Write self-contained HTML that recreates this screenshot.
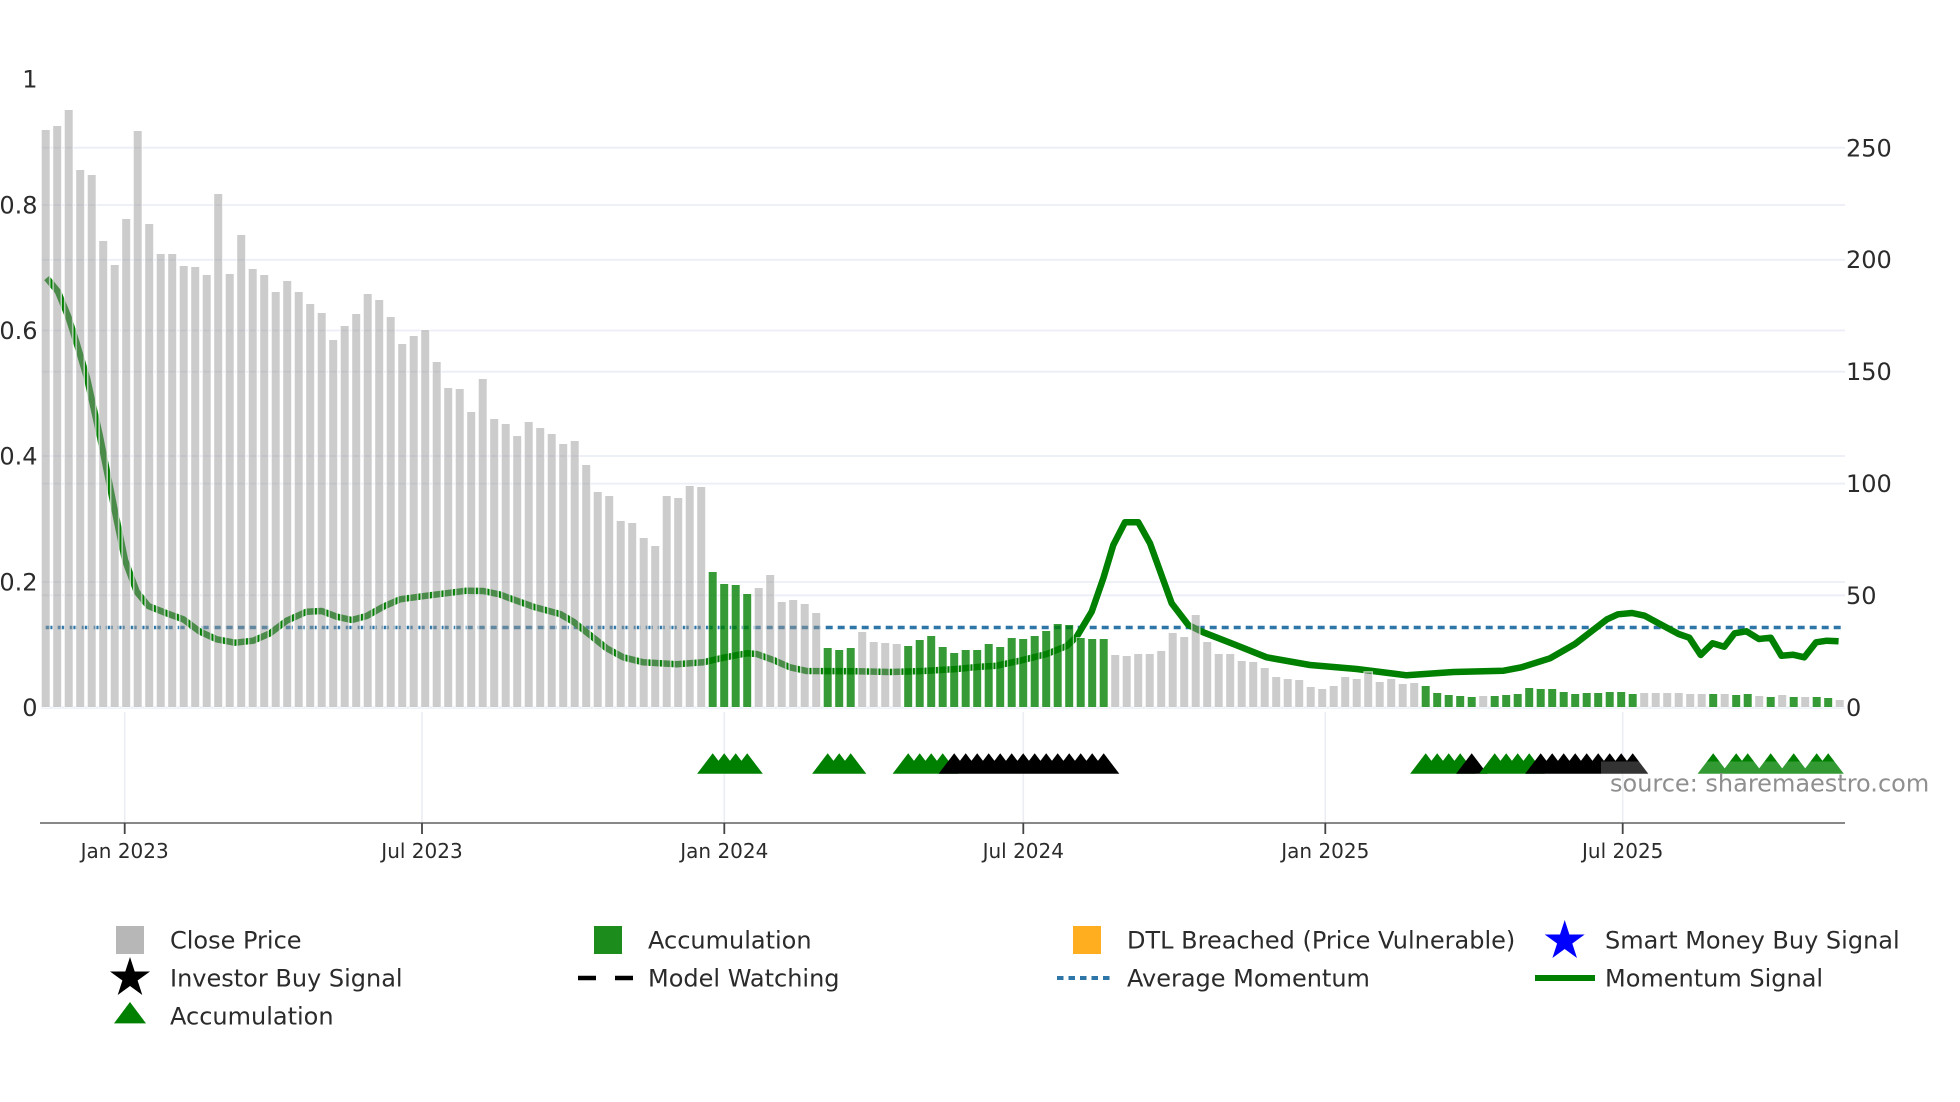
<!DOCTYPE html>
<html><head><meta charset="utf-8"><title>Chart</title>
<style>
html,body{margin:0;padding:0;background:#fff;width:1960px;height:1102px;overflow:hidden}
svg{display:block}
text{font-family:"DejaVu Sans",sans-serif;fill:#2b2b2b}
.y{font-size:24px}
.x{font-size:20px;text-anchor:middle}
.l{font-size:24px}
</style></head><body>
<svg width="1960" height="1102" viewBox="0 0 1960 1102" xmlns="http://www.w3.org/2000/svg">
<!-- horizontal grid -->
<g stroke="#ebeef6" stroke-width="1.8">
<path d="M41 147.7H1845M41 205H1845M41 259.8H1845M41 330.5H1845M41 371.7H1845M41 456H1845M41 483.6H1845M41 582H1845M41 595.3H1845"/>
</g>
<path d="M41 707.6H1845" stroke="#ebf0f8" stroke-width="2.6"/>
<!-- vertical grid -->
<path d="M124.7 712V823M422 712V823M724.3 712V823M1023.3 712V823M1325.3 712V823M1622.7 712V823" stroke="#ebedf3" stroke-width="1.6"/>
<!-- average momentum -->
<path d="M45.7 627.5H1841" stroke="#2e76a8" stroke-width="3.6" stroke-dasharray="7 5" fill="none"/>
<!-- momentum -->
<polyline fill="none" stroke="#008000" stroke-width="6.5" stroke-linejoin="round" points="46.7,278 58,291.7 68.3,316.7 76.7,343.3 87,378 100,436.7 113.3,503.3 125,560 136.7,591.7 148.3,606 166.7,613.3 183.3,619.3 200,631.7 216.7,639.3 235,642.7 253.3,640.7 270,633.3 286.7,620.7 306.7,611.7 321.7,611 336.7,616.7 351.7,620 366.7,616 383.3,606.7 400,599.3 426.7,595.7 466.7,590.7 483.3,591 500,594.5 510,598.3 533.3,606.7 560,614 573.3,621.7 590,635 606.7,648.3 623.3,657.3 643.3,662.3 676.7,664.3 703.3,662.3 723.3,657.7 746.7,653.3 756.7,654 773.3,660 790,667.3 806.7,671 856.7,671.3 890,672 923.3,671 956.7,669 980,666.7 996.7,665.7 1020,660.7 1046.7,654 1066.7,646 1076.7,636.7 1091.7,611.7 1103.3,578.3 1113.3,545 1125,522.3 1138.3,522.3 1150,543.3 1171.7,603.3 1188.3,625 1203.3,632.3 1233.3,644 1266.7,657.3 1310,665 1356.7,669 1406.7,675.3 1453.6,672 1503.6,670.7 1521.4,667.3 1550,658.3 1575,644 1607,619.3 1617.9,614.3 1632.1,613 1644.6,615.7 1678.6,634 1689.3,637.7 1700.7,655 1712.5,643.3 1724.3,646.7 1734.6,633.3 1746.4,631.3 1758.9,639 1770.7,637.7 1781.4,655.7 1792.9,654.7 1804.3,657.3 1816.1,642.3 1826.8,640.7 1838.6,641.3"/>
<!-- gray bars -->
<path fill="rgba(151,151,151,.49)" stroke="#fff" stroke-opacity=".75" stroke-width="1.6" paint-order="stroke" d="M41.7 130h8V707h-8zM53.2 126h8V707h-8zM64.7 110h8V707h-8zM76.2 170h8V707h-8zM87.7 175h8V707h-8zM99.2 241h8V707h-8zM110.7 265h8V707h-8zM122.2 219h8V707h-8zM133.7 131h8V707h-8zM145.2 224h8V707h-8zM156.7 254h8V707h-8zM168.2 254h8V707h-8zM179.7 266h8V707h-8zM191.2 267h8V707h-8zM202.7 275h8V707h-8zM214.2 194h8V707h-8zM225.7 274h8V707h-8zM237.2 235h8V707h-8zM248.7 269h8V707h-8zM260.2 275h8V707h-8zM271.7 292h8V707h-8zM283.2 281h8V707h-8zM294.7 292h8V707h-8zM306.2 304h8V707h-8zM317.7 313h8V707h-8zM329.2 340h8V707h-8zM340.7 326h8V707h-8zM352.2 314h8V707h-8zM363.7 294h8V707h-8zM375.2 300h8V707h-8zM386.7 317h8V707h-8zM398.2 344h8V707h-8zM409.7 336h8V707h-8zM421.2 330h8V707h-8zM432.7 362h8V707h-8zM444.2 388h8V707h-8zM455.7 389h8V707h-8zM467.2 412h8V707h-8zM478.7 379h8V707h-8zM490.2 419h8V707h-8zM501.7 424h8V707h-8zM513.2 436h8V707h-8zM524.7 422h8V707h-8zM536.2 428h8V707h-8zM547.7 434h8V707h-8zM559.2 444h8V707h-8zM570.7 441h8V707h-8zM582.2 465h8V707h-8zM593.7 492h8V707h-8zM605.2 496h8V707h-8zM616.7 521h8V707h-8zM628.2 523h8V707h-8zM639.7 538h8V707h-8zM651.2 546h8V707h-8zM662.7 496h8V707h-8zM674.2 498h8V707h-8zM685.7 486h8V707h-8zM697.2 487h8V707h-8zM754.7 588h8V707h-8zM766.2 575h8V707h-8zM777.7 602h8V707h-8zM789.2 600h8V707h-8zM800.7 604h8V707h-8zM812.2 613h8V707h-8zM858.2 632h8V707h-8zM869.7 642h8V707h-8zM881.2 643h8V707h-8zM892.7 644h8V707h-8zM1111.2 655h8V707h-8zM1122.7 656h8V707h-8zM1134.2 654h8V707h-8zM1145.7 654h8V707h-8zM1157.2 651h8V707h-8zM1168.7 633h8V707h-8zM1180.2 637h8V707h-8zM1191.7 615h8V707h-8zM1203.2 642h8V707h-8zM1214.7 654h8V707h-8zM1226.2 654h8V707h-8zM1237.7 661h8V707h-8zM1249.2 662h8V707h-8zM1260.7 668h8V707h-8zM1272.2 677h8V707h-8zM1283.7 679h8V707h-8zM1295.2 680h8V707h-8zM1306.7 687h8V707h-8zM1318.2 689h8V707h-8zM1329.7 686h8V707h-8zM1341.2 677h8V707h-8zM1352.7 679h8V707h-8zM1364.2 672h8V707h-8zM1375.7 682h8V707h-8zM1387.2 679h8V707h-8zM1398.7 684h8V707h-8zM1410.2 683h8V707h-8zM1479.2 696h8V707h-8zM1640.2 693h8V707h-8zM1651.7 693h8V707h-8zM1663.2 693h8V707h-8zM1674.7 693h8V707h-8zM1686.2 694h8V707h-8zM1697.7 694h8V707h-8zM1720.7 694h8V707h-8zM1755.2 696h8V707h-8zM1778.2 695h8V707h-8zM1801.2 697h8V707h-8zM1835.7 700h8V707h-8z"/>
<!-- green bars -->
<path fill="rgba(0,127,0,.79)" stroke="#fff" stroke-opacity=".75" stroke-width="1.6" paint-order="stroke" d="M708.7 572h8V707h-8zM720.2 584h8V707h-8zM731.7 585h8V707h-8zM743.2 594h8V707h-8zM823.7 648h8V707h-8zM835.2 650h8V707h-8zM846.7 648h8V707h-8zM904.2 646h8V707h-8zM915.7 640h8V707h-8zM927.2 636h8V707h-8zM938.7 647h8V707h-8zM950.2 653h8V707h-8zM961.7 650h8V707h-8zM973.2 650h8V707h-8zM984.7 644h8V707h-8zM996.2 647h8V707h-8zM1007.7 638h8V707h-8zM1019.2 639h8V707h-8zM1030.7 636h8V707h-8zM1042.2 631h8V707h-8zM1053.7 624h8V707h-8zM1065.2 625h8V707h-8zM1076.7 638h8V707h-8zM1088.2 639h8V707h-8zM1099.7 639h8V707h-8zM1421.7 686h8V707h-8zM1433.2 693h8V707h-8zM1444.7 695h8V707h-8zM1456.2 696h8V707h-8zM1467.7 697h8V707h-8zM1490.7 696h8V707h-8zM1502.2 695h8V707h-8zM1513.7 694h8V707h-8zM1525.2 688h8V707h-8zM1536.7 689h8V707h-8zM1548.2 689h8V707h-8zM1559.7 692h8V707h-8zM1571.2 694h8V707h-8zM1582.7 693h8V707h-8zM1594.2 693h8V707h-8zM1605.7 692h8V707h-8zM1617.2 692h8V707h-8zM1628.7 694h8V707h-8zM1709.2 694h8V707h-8zM1732.2 695h8V707h-8zM1743.7 694h8V707h-8zM1766.7 697h8V707h-8zM1789.7 697h8V707h-8zM1812.7 697h8V707h-8zM1824.2 698h8V707h-8z"/>
<!-- triangles -->
<path fill="#008000" d="M712.7 753.3l-15.6 20.4h31.2zM724.2 753.3l-15.6 20.4h31.2zM735.7 753.3l-15.6 20.4h31.2zM747.2 753.3l-15.6 20.4h31.2zM827.7 753.3l-15.6 20.4h31.2zM839.2 753.3l-15.6 20.4h31.2zM850.7 753.3l-15.6 20.4h31.2zM908.2 753.3l-15.6 20.4h31.2zM919.7 753.3l-15.6 20.4h31.2zM931.2 753.3l-15.6 20.4h31.2zM942.7 753.3l-15.6 20.4h31.2z"/>
<path fill="#000" d="M954.2 753.3l-15.6 20.4h31.2zM965.7 753.3l-15.6 20.4h31.2zM977.2 753.3l-15.6 20.4h31.2zM988.7 753.3l-15.6 20.4h31.2zM1000.2 753.3l-15.6 20.4h31.2zM1011.7 753.3l-15.6 20.4h31.2zM1023.2 753.3l-15.6 20.4h31.2zM1034.7 753.3l-15.6 20.4h31.2zM1046.2 753.3l-15.6 20.4h31.2zM1057.7 753.3l-15.6 20.4h31.2zM1069.2 753.3l-15.6 20.4h31.2zM1080.7 753.3l-15.6 20.4h31.2zM1092.2 753.3l-15.6 20.4h31.2zM1103.7 753.3l-15.6 20.4h31.2z"/>
<path fill="#008000" d="M1425.7 753.3l-15.6 20.4h31.2zM1437.2 753.3l-15.6 20.4h31.2zM1448.7 753.3l-15.6 20.4h31.2zM1460.2 753.3l-15.6 20.4h31.2z"/>
<path fill="#000" d="M1471.7 753.3l-15.6 20.4h31.2z"/>
<path fill="#008000" d="M1494.7 753.3l-15.6 20.4h31.2zM1506.2 753.3l-15.6 20.4h31.2zM1517.7 753.3l-15.6 20.4h31.2zM1529.2 753.3l-15.6 20.4h31.2z"/>
<path fill="#000" d="M1540.7 753.3l-15.6 20.4h31.2zM1552.2 753.3l-15.6 20.4h31.2zM1563.7 753.3l-15.6 20.4h31.2zM1575.2 753.3l-15.6 20.4h31.2zM1586.7 753.3l-15.6 20.4h31.2zM1598.2 753.3l-15.6 20.4h31.2zM1609.7 753.3l-15.6 20.4h31.2zM1621.2 753.3l-15.6 20.4h31.2zM1632.7 753.3l-15.6 20.4h31.2z"/>
<path fill="#008000" d="M1713.2 753.3l-15.6 20.4h31.2zM1736.2 753.3l-15.6 20.4h31.2zM1747.7 753.3l-15.6 20.4h31.2zM1770.7 753.3l-15.6 20.4h31.2zM1793.7 753.3l-15.6 20.4h31.2zM1816.7 753.3l-15.6 20.4h31.2zM1828.2 753.3l-15.6 20.4h31.2z"/>
<!-- x axis -->
<path d="M40 823H1845" stroke="#888" stroke-width="2"/>
<path d="M124.7 823V834M422 823V834M724.3 823V834M1023.3 823V834M1325.3 823V834M1622.7 823V834" stroke="#444" stroke-width="1.8"/>
<!-- watermark overlay -->
<rect x="1601" y="761.5" width="332" height="38" fill="#fff" fill-opacity=".2"/>
<text x="1610" y="791.5" font-size="24" style="fill:#8f8f8f">source: sharemaestro.com</text>
<!-- axis labels -->
<g class="y" text-anchor="end">
<text x="37.5" y="87.6" class="y">1</text>
<text x="37.5" y="213.5" class="y">0.8</text>
<text x="37.5" y="339" class="y">0.6</text>
<text x="37.5" y="464.6" class="y">0.4</text>
<text x="37.5" y="590.6" class="y">0.2</text>
<text x="37.5" y="715.8" class="y">0</text>
</g>
<text x="1846" y="156.3" class="y">250</text>
<text x="1846" y="268.2" class="y">200</text>
<text x="1846" y="380.1" class="y">150</text>
<text x="1846" y="492" class="y">100</text>
<text x="1846" y="603.9" class="y">50</text>
<text x="1846" y="715.8" class="y">0</text>
<text x="124.7" y="858" class="x">Jan 2023</text>
<text x="422" y="858" class="x">Jul 2023</text>
<text x="724.3" y="858" class="x">Jan 2024</text>
<text x="1023.3" y="858" class="x">Jul 2024</text>
<text x="1325.3" y="858" class="x">Jan 2025</text>
<text x="1622.7" y="858" class="x">Jul 2025</text>
<!-- legend -->
<rect x="116" y="926" width="28" height="28" fill="#b7b7b7"/>
<rect x="594" y="926" width="28" height="28" fill="#1c8c1c"/>
<rect x="1073" y="926" width="28" height="28" fill="#ffae1f"/>
<polygon fill="#0000ff" transform="translate(1564.7 941)" points="0,-21 4.7,-6.5 20,-6.5 7.6,2.5 12.3,17 0,8 -12.3,17 -7.6,2.5 -20,-6.5 -4.7,-6.5"/>
<polygon fill="#000" transform="translate(130 978)" points="0,-21 4.7,-6.5 20,-6.5 7.6,2.5 12.3,17 0,8 -12.3,17 -7.6,2.5 -20,-6.5 -4.7,-6.5"/>
<path d="M578 978H596M615 978H633" stroke="#000" stroke-width="4.5"/>
<path d="M1057 978H1113" stroke="#2e76a8" stroke-width="4" stroke-dasharray="6.5 5"/>
<path d="M1535 978H1595" stroke="#008000" stroke-width="6"/>
<polygon fill="#008000" points="130,1002 114,1023.4 146,1023.4"/>
<text x="170" y="948.5" class="l">Close Price</text>
<text x="648" y="948.5" class="l">Accumulation</text>
<text x="1127" y="948.5" class="l">DTL Breached (Price Vulnerable)</text>
<text x="1605" y="948.5" class="l">Smart Money Buy Signal</text>
<text x="170" y="986.5" class="l">Investor Buy Signal</text>
<text x="648" y="986.5" class="l">Model Watching</text>
<text x="1127" y="986.5" class="l">Average Momentum</text>
<text x="1605" y="986.5" class="l">Momentum Signal</text>
<text x="170" y="1024.5" class="l">Accumulation</text>
</svg>
</body></html>
